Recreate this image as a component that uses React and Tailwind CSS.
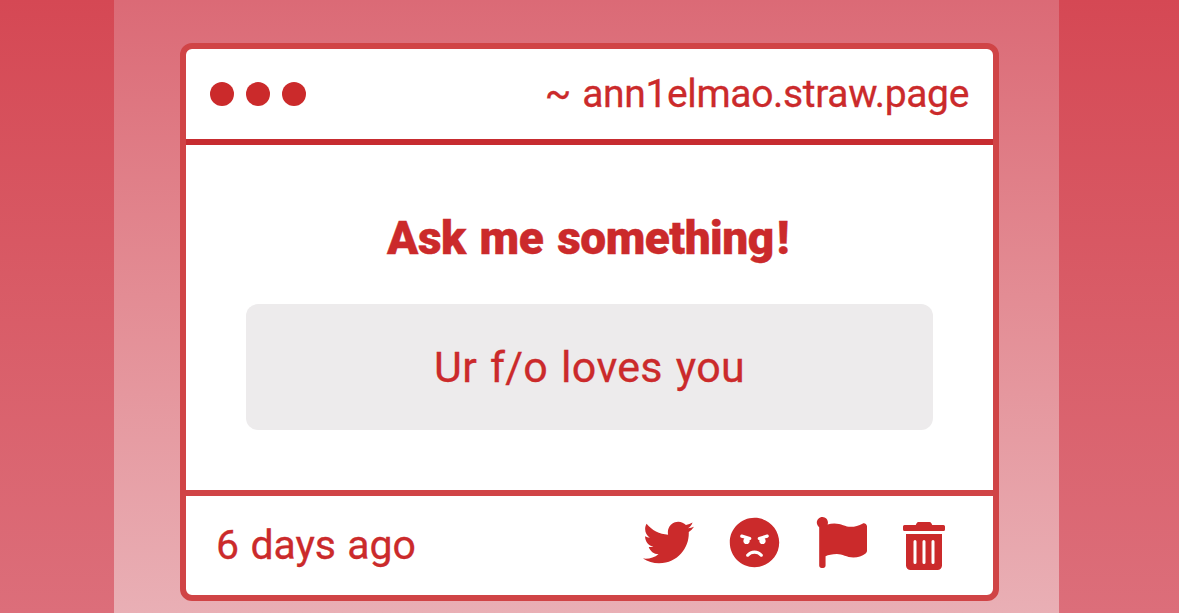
import { FaAngry, FaFlag, FaTrashAlt, FaTwitter } from "react-icons/fa";

export default function App() {
  return (
    <div className="h-[613px] w-full overflow-hidden bg-gradient-to-b from-[#d54854] to-[#dc6e7a] pr-[120px] pl-[114px] font-['Roboto',sans-serif] text-[#cb2a2b]">
      <div className="h-full bg-gradient-to-b from-[#db6a76] to-[#e9afb5] pt-[43px] pr-[60px] pl-[66px]">
        <div className="flex h-[558px] w-full flex-col overflow-hidden rounded-xl border-6 border-[#d04446] bg-white">
          {/* Title bar */}
          <div className="flex h-24 shrink-0 items-center justify-between border-b-6 border-[#c72c30] px-6">
            <div className="flex gap-3">
              <span className="size-6 rounded-full bg-[#cb2a2b]" />
              <span className="size-6 rounded-full bg-[#cb2a2b]" />
              <span className="size-6 rounded-full bg-[#cb2a2b]" />
            </div>
            <span className="text-[39px] leading-none tracking-[-0.35px] whitespace-nowrap [word-spacing:2px] [-webkit-text-stroke:0.3px]">
              ~ ann1elmao.straw.page
            </span>
          </div>

          {/* Question */}
          <div className="flex flex-1 flex-col items-center px-[60px] pt-[68px]">
            <h1 className="mr-[3px] text-[46px] leading-[50px] font-black tracking-[-0.5px] whitespace-nowrap [word-spacing:3px] [-webkit-text-stroke:0.4px]">
              Ask me something<span className="ml-[3px]">!</span>
            </h1>
            <div className="mt-[41px] flex h-[126px] w-full items-center justify-center rounded-xl bg-[#edebec]">
              <p className="text-[43px] leading-none tracking-[0.3px] whitespace-nowrap [word-spacing:2px] [-webkit-text-stroke:0.3px]">
                Ur f/o loves you
              </p>
            </div>
          </div>

          {/* Footer */}
          <div className="flex h-[105px] shrink-0 items-center justify-between border-t-6 border-[#d04446] pr-12 pl-[30px]">
            <span className="text-[41px] leading-none tracking-[-0.1px] whitespace-nowrap [word-spacing:1.5px] [-webkit-text-stroke:0.3px]">
              6 days ago
            </span>
            <div className="flex items-center">
              <FaTwitter className="mr-[35px] size-[51px] -translate-y-[3px]" />
              <FaAngry className="mr-9 size-[51px] -translate-y-[3px]" />
              <FaFlag className="mr-9 size-[51px] -translate-y-[3px]" />
              <FaTrashAlt className="h-12 w-[42px]" />
            </div>
          </div>
        </div>
      </div>
    </div>
  );
}
